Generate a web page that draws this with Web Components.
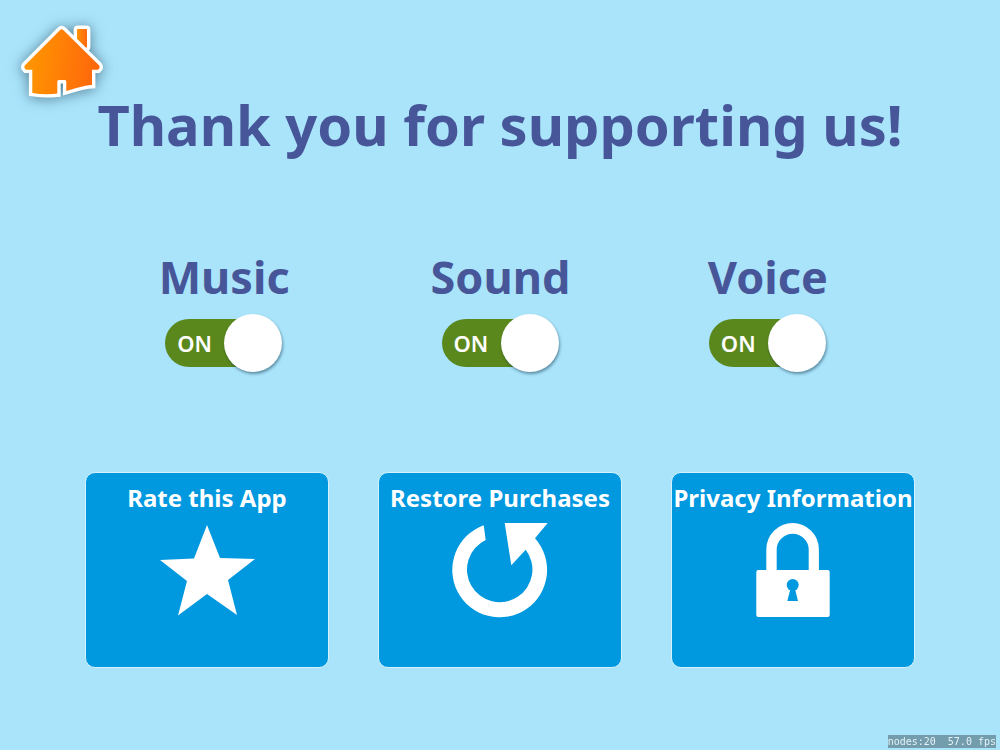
<!DOCTYPE html>
<html lang="en">
<head>
<meta charset="utf-8">
<meta name="viewport" content="width=device-width, initial-scale=1">
<title>Settings</title>
<style>
  body { margin: 0; background: #a9e4fb; color: #475699; font-family: "Chalkboard SE", "Noto Sans", sans-serif; font-weight: 700; }
</style>
</head>
<body>
<settings-screen></settings-screen>

<template id="screen-template">
  <style>
    :host { display: flex; flex-direction: column; min-height: 100vh; box-sizing: border-box; }
    header { height: 84px; padding: 15px 10px 0; box-sizing: border-box; }
    h1 { margin: 0; font-size: 56px; line-height: 80px; text-align: center; font-weight: 700; }
    .switches { display: grid; grid-template-columns: 276fr 276fr 258fr; justify-items: center; padding: 82px 103px 0 86px; }
    .tiles { display: grid; grid-template-columns: repeat(3, 1fr); gap: 49px; padding: 100px 85px 80px; }
    frame-stats { position: fixed; right: 4px; bottom: 2px; }
  </style>
  <header><home-button></home-button></header>
  <h1>Thank you for supporting us!</h1>
  <section class="switches">
    <toggle-switch>Music</toggle-switch>
    <toggle-switch>Sound</toggle-switch>
    <toggle-switch>Voice</toggle-switch>
  </section>
  <section class="tiles">
    <action-tile>Rate this App
      <svg slot="icon" viewBox="0 0 100 100" width="100" height="100" fill="#fff" aria-hidden="true"><path d="M50 5 63 38 98 39 71 60 80 95 50 74 21 95.5 30 61 3 40 37 38.5Z"/></svg>
    </action-tile>
    <action-tile>Restore Purchases
      <svg slot="icon" viewBox="0 0 100 100" width="100" height="100" fill="#fff" aria-hidden="true"><path d="M33.7 5.3A47.4 47.4 0 1 0 85 18.3L97.7 3H54.7L61.3 45.3 75.7 29.7A32.7 32.7 0 1 1 35.7 20Z"/></svg>
    </action-tile>
    <action-tile>Privacy Information
      <svg slot="icon" viewBox="0 0 100 100" width="100" height="100" fill="#fff" aria-hidden="true"><path d="M23.3 51V29.3a26.3 26.3 0 0 1 52.6 0V51H65.7V29.7a16 16 0 0 0-32 0V51Z"/><rect x="13.3" y="50" width="73.4" height="47" rx="2"/><g fill="#0098df"><circle cx="49.7" cy="65" r="6"/><path d="M47.4 69H52L55 81H44.3Z"/></g></svg>
    </action-tile>
  </section>
  <frame-stats></frame-stats>
</template>

<template id="home-template">
  <style>
    :host { display: inline-block; }
    button { display: block; padding: 0; border: 0; background: none; cursor: pointer; }
    svg { display: block; overflow: visible; filter: drop-shadow(0 1px 7px rgba(30, 60, 80, .6)); }
  </style>
  <button type="button" aria-label="Home">
    <svg viewBox="10 15 105 95" width="105" height="95" aria-hidden="true">
      <defs>
        <linearGradient id="roof" gradientUnits="userSpaceOnUse" x1="24" y1="60" x2="100" y2="70"><stop offset="0" stop-color="#ff9800"/><stop offset="1" stop-color="#ff650c"/></linearGradient>
        <linearGradient id="stack"><stop offset="0" stop-color="#ff9300"/><stop offset="1" stop-color="#ff6810"/></linearGradient>
      </defs>
      <g stroke="#fff" stroke-width="6.8" paint-order="stroke">
        <path fill="url(#stack)" stroke-linejoin="round" d="M77 30q0-1 1-1h8q1 0 1 1v16.5q0 1.5-2 1.5h-1L77 41Z"/>
        <path fill="url(#roof)" d="M59.9 30.2q1.800-1.700 3.600 0L98.700 65q2.200 2.500-.7 4.700H92V85.100C83 85.500 76 88.500 66.300 91V81.500q0-1.500-1.500-1.500h-6q-1.500 0-1.500 1.500V93.600Q45 95 32.300 93V69.700H26q-2.900-2.200-.8-4.700Z"/>
      </g>
    </svg>
  </button>
</template>

<template id="switch-template">
  <style>
    :host { display: block; }
    label { display: grid; justify-items: center; gap: 6px; cursor: pointer; }
    .name { font-size: 45px; line-height: 62px; }
    .control { display: grid; align-items: center; width: 118px; height: 58px; }
    input, .state { grid-area: 1 / 1; }
    input { appearance: none; margin: 0; width: 100px; height: 48px; border-radius: 24px; background: #5a881d; display: flex; align-items: center; cursor: pointer; }
    input::before { content: ""; flex: none; width: 58px; height: 58px; margin-left: 59px; border-radius: 50%; background: #fff; box-shadow: 1px 2px 3px rgba(0, 40, 60, .45); }
    input:not(:checked) { background: #8a9aa3; }
    input:not(:checked)::before { margin-left: 0; }
    .state { z-index: 1; padding-left: 12px; color: #fff; font-size: 22px; line-height: 30px; font-weight: 600; pointer-events: none; }
  </style>
  <label>
    <span class="name"><slot></slot></span>
    <span class="control"><input type="checkbox" role="switch" checked><span class="state">ON</span></span>
  </label>
</template>

<template id="tile-template">
  <style>
    :host { display: block; }
    button { display: flex; flex-direction: column; align-items: center; width: 100%; min-height: 196px; padding: 7px 0; box-sizing: border-box; border: 1px solid #d5f2fd; border-radius: 10px; background: #0098df; color: #fff; font: inherit; font-size: 24px; line-height: 36px; cursor: pointer; }
    .text { white-space: nowrap; margin-bottom: 4px; }
    ::slotted(svg) { display: block; }
  </style>
  <button type="button"><span class="text"><slot></slot></span><slot name="icon"></slot></button>
</template>

<template id="stats-template">
  <style>
    :host { display: block; background: #739cac; color: #e4f3f8; font: 400 10px/13px "DejaVu Sans Mono", monospace; }
    span { white-space: pre; }
  </style>
  <span>nodes:20  57.0 fps</span>
</template>

<script>
  const mount = (host, id) => {
    host.attachShadow({ mode: "open" }).append(document.getElementById(id).content.cloneNode(true));
  };
  class HomeButton extends HTMLElement { constructor() { super(); mount(this, "home-template"); } }
  class ToggleSwitch extends HTMLElement {
    constructor() {
      super();
      mount(this, "switch-template");
      const input = this.shadowRoot.querySelector("input");
      const state = this.shadowRoot.querySelector(".state");
      input.addEventListener("change", () => {
        state.textContent = input.checked ? "ON" : "OFF";
        state.style.paddingLeft = input.checked ? "" : "62px";
      });
    }
  }
  class ActionTile extends HTMLElement { constructor() { super(); mount(this, "tile-template"); } }
  class FrameStats extends HTMLElement { constructor() { super(); mount(this, "stats-template"); } }
  class SettingsScreen extends HTMLElement { constructor() { super(); mount(this, "screen-template"); } }
  customElements.define("home-button", HomeButton);
  customElements.define("toggle-switch", ToggleSwitch);
  customElements.define("action-tile", ActionTile);
  customElements.define("frame-stats", FrameStats);
  customElements.define("settings-screen", SettingsScreen);
</script>
</body>
</html>
